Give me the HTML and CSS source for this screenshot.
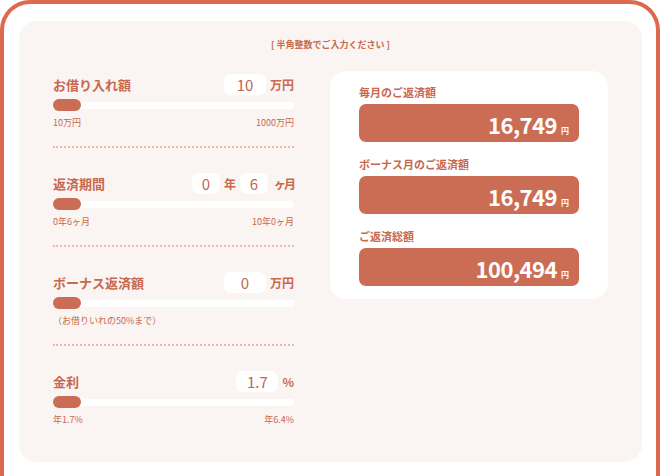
FILE: index.html
```html
<!DOCTYPE html>
<html>
<head>
    <title>ローン返済シミュレーション</title>
    <meta name="viewport" content="width=device-width, initial-scale=1">
    <link rel="stylesheet" href="styles.css">
</head>

<body>
    <div class="frame">
        <div class="panel">
            <p class="note">[ 半角整数でご入力ください ]</p>

            <div class="columns">
                <div class="inputs">
                    <div class="field">
                        <div class="field-row">
                            <span class="field-label">お借り入れ額</span>
                            <div class="field-value">
                                <span class="num-box">10</span>
                                <span class="unit">万円</span>
                            </div>
                        </div>
                        <div class="slider"><span class="thumb"></span></div>
                        <div class="range">
                            <span>10万円</span>
                            <span>1000万円</span>
                        </div>
                    </div>

                    <div class="field">
                        <div class="field-row">
                            <span class="field-label">返済期間</span>
                            <div class="field-value">
                                <span class="num-box small">0</span>
                                <span class="unit">年</span>
                                <span class="num-box small">6</span>
                                <span class="unit wide">ヶ月</span>
                            </div>
                        </div>
                        <div class="slider"><span class="thumb"></span></div>
                        <div class="range">
                            <span>0年6ヶ月</span>
                            <span>10年0ヶ月</span>
                        </div>
                    </div>

                    <div class="field">
                        <div class="field-row">
                            <span class="field-label">ボーナス返済額</span>
                            <div class="field-value">
                                <span class="num-box">0</span>
                                <span class="unit">万円</span>
                            </div>
                        </div>
                        <div class="slider"><span class="thumb"></span></div>
                        <div class="range">
                            <span>（お借りいれの50%まで）</span>
                        </div>
                    </div>

                    <div class="field last">
                        <div class="field-row">
                            <span class="field-label">金利</span>
                            <div class="field-value">
                                <span class="num-box">1.7</span>
                                <span class="unit">%</span>
                            </div>
                        </div>
                        <div class="slider"><span class="thumb"></span></div>
                        <div class="range">
                            <span>年1.7%</span>
                            <span>年6.4%</span>
                        </div>
                    </div>
                </div>

                <div class="results">
                    <div class="result-label">毎月のご返済額</div>
                    <div class="result-box"><span class="amount">16,749</span><span class="yen">円</span></div>

                    <div class="result-label">ボーナス月のご返済額</div>
                    <div class="result-box"><span class="amount">16,749</span><span class="yen">円</span></div>

                    <div class="result-label">ご返済総額</div>
                    <div class="result-box last"><span class="amount">100,494</span><span class="yen">円</span></div>
                </div>
            </div>
        </div>
    </div>
</body>
</html>
```

FILE: styles.css
```css
body {
    margin: 0;
    padding: 0;
    background-color: #fff;
    font-family: "Noto Sans CJK JP", "Noto Sans", sans-serif;
    color: #c8684e;
}

/* outer frame, its bottom edge is cut off by the window */
.frame {
    width: 660px;
    height: 476px;
    box-sizing: border-box;
    border: 4px solid #dd6a4f;
    border-bottom: none;
    border-radius: 30px 30px 0 0;
    padding: 17px 14px 0 15px;
}

.panel {
    height: 441px;
    box-sizing: border-box;
    background-color: #faf5f3;
    border-radius: 18px;
    padding: 17px 34px 0 34px;
}

.note {
    margin: 0;
    text-align: center;
    font-size: 9px;
    line-height: 14px;
    font-weight: bold;
}

.columns {
    display: flex;
    gap: 36px;
    margin-top: 17px;
    align-items: flex-start;
}

.inputs {
    width: 241px;
    padding-top: 5px;
}

.field {
    border-bottom: 2px dotted #ecb9ac;
    padding-bottom: 17px;
    margin-bottom: 25px;
}

.field.last {
    border-bottom: none;
    margin-bottom: 0;
}

.field-row {
    display: flex;
    justify-content: space-between;
    align-items: center;
    height: 21px;
}

.field-label {
    font-size: 13px;
    font-weight: bold;
}

.field-value {
    display: flex;
    align-items: center;
}

.num-box {
    display: inline-block;
    width: 42px;
    height: 21px;
    line-height: 21px;
    background-color: #fff;
    border-radius: 7px;
    text-align: center;
    font-size: 15px;
    color: #c4654d;
}

.num-box.small {
    width: 28px;
}

.unit {
    font-size: 12px;
    font-weight: bold;
    margin-left: 4px;
    min-width: 10px;
}

.unit + .num-box {
    margin-left: 4px;
}

.unit.wide {
    margin-left: 6px;
    letter-spacing: -2px;
}

.slider {
    position: relative;
    height: 7px;
    margin: 7px 0 7px;
    background-color: #fff;
    border-radius: 4px;
}

.thumb {
    position: absolute;
    left: 0;
    top: -3px;
    width: 28px;
    height: 12px;
    border-radius: 6px;
    background-color: #cb6d54;
}

.range {
    display: flex;
    justify-content: space-between;
    font-size: 9px;
    line-height: 13px;
}

.results {
    width: 278px;
    box-sizing: border-box;
    margin-top: 2px;
    background-color: #fff;
    border-radius: 16px;
    padding: 14px 29px 13px 29px;
}

.result-label {
    font-size: 11px;
    line-height: 14px;
    font-weight: bold;
    margin-bottom: 5px;
}

.result-box {
    display: flex;
    justify-content: flex-end;
    align-items: baseline;
    height: 38px;
    box-sizing: border-box;
    padding: 6px 10px 0 0;
    margin-bottom: 15px;
    background-color: #cb6d54;
    border-radius: 7px;
    color: #fff;
}

.result-box.last {
    margin-bottom: 0;
}

.amount {
    font-size: 22px;
    line-height: 28px;
    font-weight: bold;
    letter-spacing: -0.5px;
}

.yen {
    font-size: 8px;
    font-weight: bold;
    margin-left: 4px;
}
```
